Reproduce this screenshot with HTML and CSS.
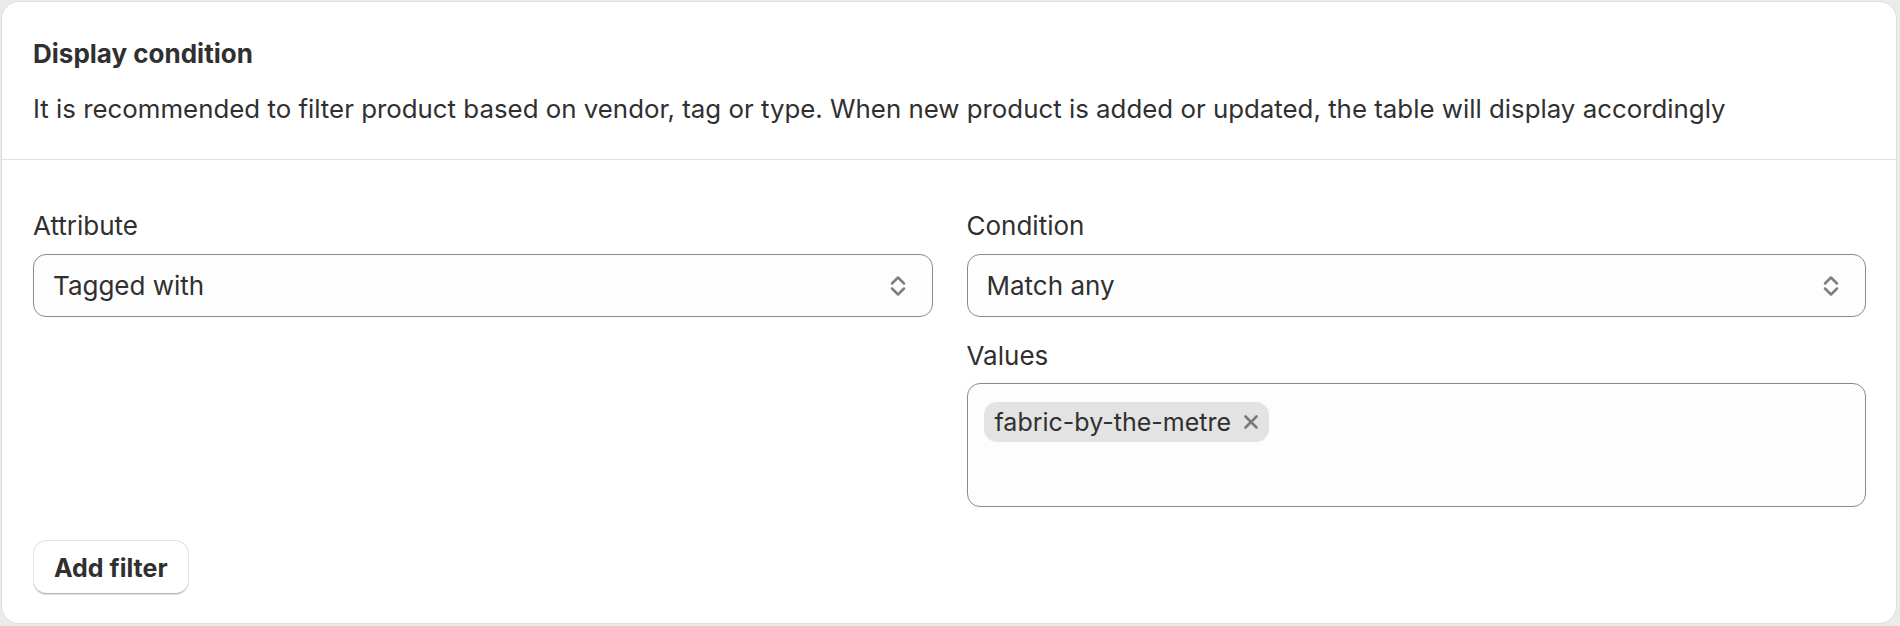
FILE: index.html
```html
<!DOCTYPE html>
<html lang="en">
<head>
<meta charset="utf-8">
<title>Display condition</title>
<link rel="stylesheet" href="styles.css">
</head>
<body>
<div class="card">
  <div class="card-head">
    <h2 class="title">Display condition</h2>
    <p class="desc">It is recommended to filter product based on vendor, tag or type. When new product is added or updated, the table will display accordingly</p>
  </div>
  <div class="card-body">
    <div class="grid">
      <div class="col">
        <div class="field">
          <div class="label">Attribute</div>
          <div class="select">
            <span class="select-text">Tagged with</span>
            <svg class="chev" viewBox="0 0 16 24" width="16" height="24"><path d="M2 9.5 L8 3.5 L14 9.5 M2 14.5 L8 20.5 L14 14.5" fill="none" stroke="#7f7f7f" stroke-width="2.5" stroke-linecap="round" stroke-linejoin="round"/></svg>
          </div>
        </div>
      </div>
      <div class="col">
        <div class="field">
          <div class="label">Condition</div>
          <div class="select">
            <span class="select-text">Match any</span>
            <svg class="chev" viewBox="0 0 16 24" width="16" height="24"><path d="M2 9.5 L8 3.5 L14 9.5 M2 14.5 L8 20.5 L14 14.5" fill="none" stroke="#7f7f7f" stroke-width="2.5" stroke-linecap="round" stroke-linejoin="round"/></svg>
          </div>
        </div>
        <div class="field">
          <div class="label">Values</div>
          <div class="values">
            <span class="tag">
              <span class="tag-text">fabric-by-the-metre</span>
              <svg class="tag-x" viewBox="0 0 16 16" width="16" height="16"><path d="M2.5 2.5 L13.5 13.5 M13.5 2.5 L2.5 13.5" fill="none" stroke="#7a7a7a" stroke-width="2.6" stroke-linecap="round"/></svg>
            </span>
          </div>
        </div>
      </div>
    </div>
    <button class="btn">Add filter</button>
  </div>
</div>
</body>
</html>
```

FILE: styles.css
```css
* { box-sizing: border-box; }
html, body { margin: 0; }
body {
  width: 1900px;
  height: 626px;
  padding: 1px 3px 2px 1px;
  background: #ebebeb;
  font-family: Inter, "Noto Sans", sans-serif;
  color: #303030;
  overflow: hidden;
}
.card {
  height: 623px;
  background: #ffffff;
  border: 1px solid #dedede;
  border-radius: 18px;
  overflow: hidden;
}
.card-head {
  padding: 36px 30px 32px 31px;
  border-bottom: 1px solid #e3e3e3;
}
.title {
  margin: 0;
  font-size: 26px;
  line-height: 32px;
  font-weight: 700;
}
.desc {
  margin: 21px 0 0;
  font-size: 25.85px;
  line-height: 36px;
  font-weight: 400;
}
.card-body {
  padding: 48px 30px 0 31px;
}
.grid {
  display: grid;
  grid-template-columns: 1fr 1fr;
  column-gap: 34px;
  align-items: start;
}
.col {
  display: flex;
  flex-direction: column;
  gap: 21px;
}
.label {
  font-size: 26px;
  line-height: 36px;
  margin-bottom: 10px;
}
.field:nth-child(2) .label { margin-bottom: 9px; }
.select {
  height: 63px;
  display: flex;
  align-items: center;
  justify-content: space-between;
  padding: 0 26px 0 19px;
  background: #fdfdfd;
  border: 1.5px solid #8a8a8a;
  border-radius: 13px;
  font-size: 26px;
}
.chev { display: block; }
.values {
  height: 124px;
  padding: 18px 16px;
  background: #fdfdfd;
  border: 1.5px solid #8a8a8a;
  border-radius: 13px;
  display: flex;
  align-items: flex-start;
}
.tag {
  height: 40px;
  display: inline-flex;
  align-items: center;
  gap: 12px;
  padding: 0 10px 0 11px;
  background: #e3e3e3;
  border-radius: 13px;
  font-size: 25px;
}
.tag-x { display: block; }
.btn {
  margin-top: 33px;
  height: 55px;
  padding: 0 21px;
  background: #ffffff;
  border: none;
  border-radius: 14px;
  box-shadow: inset 0 0 0 1px #e3e3e3, inset 0 -2px 0 #b5b5b5;
  font-family: Inter, "Noto Sans", sans-serif;
  font-size: 25px;
  font-weight: 700;
  color: #303030;
}
```
